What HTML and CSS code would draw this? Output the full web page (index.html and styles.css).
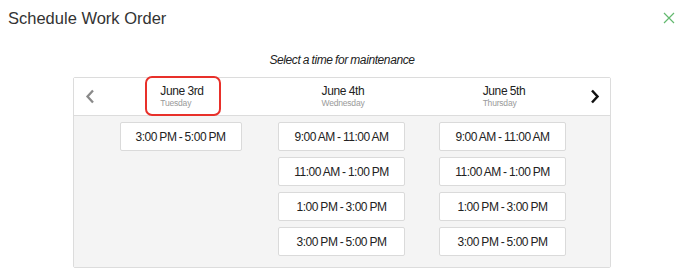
FILE: index.html
```html
<!DOCTYPE html>
<html lang="en">
<head>
    <meta charset="UTF-8">
    <title>Schedule Work Order</title>
    <link rel="stylesheet" href="styles.css">
</head>
<body>
    <div class="modal-header">
        <h1>Schedule Work Order</h1>
        <svg class="close" width="12" height="12" viewBox="0 0 12 12">
            <path d="M1 1 L11 11 M11 1 L1 11" stroke="#63b96f" stroke-width="1.2" fill="none"/>
        </svg>
    </div>

    <p class="prompt">Select a time for maintenance</p>

    <div class="scheduler">
        <div class="days">
            <div class="nav prev">
                <svg width="10" height="15" viewBox="0 0 10 15">
                    <path d="M8 1.5 L2.5 7.5 L8 13.5" stroke="#8a8a8a" stroke-width="2.3" fill="none"/>
                </svg>
            </div>
            <div class="day selected">
                <div class="day-label">
                    <div class="date">June 3rd</div>
                    <div class="weekday">Tuesday</div>
                </div>
                <div class="highlight"></div>
            </div>
            <div class="day">
                <div class="day-label">
                    <div class="date">June 4th</div>
                    <div class="weekday">Wednesday</div>
                </div>
            </div>
            <div class="day">
                <div class="day-label">
                    <div class="date">June 5th</div>
                    <div class="weekday">Thursday</div>
                </div>
            </div>
            <div class="nav next">
                <svg width="10" height="15" viewBox="0 0 10 15">
                    <path d="M2 1.5 L7.5 7.5 L2 13.5" stroke="#111" stroke-width="2.5" fill="none"/>
                </svg>
            </div>
        </div>

        <div class="slots">
            <div></div>
            <div class="slot-col">
                <div class="slot-list">
                    <button class="slot">3:00 PM - 5:00 PM</button>
                </div>
            </div>
            <div class="slot-col">
                <div class="slot-list">
                    <button class="slot">9:00 AM - 11:00 AM</button>
                    <button class="slot">11:00 AM - 1:00 PM</button>
                    <button class="slot">1:00 PM - 3:00 PM</button>
                    <button class="slot">3:00 PM - 5:00 PM</button>
                </div>
            </div>
            <div class="slot-col">
                <div class="slot-list">
                    <button class="slot">9:00 AM - 11:00 AM</button>
                    <button class="slot">11:00 AM - 1:00 PM</button>
                    <button class="slot">1:00 PM - 3:00 PM</button>
                    <button class="slot">3:00 PM - 5:00 PM</button>
                </div>
            </div>
            <div></div>
        </div>
    </div>
</body>
</html>
```

FILE: styles.css
```css
body {
    margin: 0;
    font-family: "Liberation Sans", Arial, sans-serif;
    color: #222;
    background: #fff;
}
.modal-header {
    display: flex;
    justify-content: space-between;
    align-items: center;
    padding: 7px 13px 0 8px;
    height: 22px;
}
h1 {
    margin: 0;
    font-size: 16.5px;
    font-weight: normal;
    color: #333;
}
.close {
    display: block;
}
.prompt {
    margin: 24px 0 0 73px;
    width: 538px;
    text-align: center;
    font-size: 12px;
    font-style: italic;
    letter-spacing: -0.4px;
    word-spacing: -0.5px;
    line-height: 14px;
    color: #222;
}
.scheduler {
    margin: 10px 0 0 73px;
    width: 536px;
    border: 1px solid #dcdcdc;
    border-radius: 2px;
}
.days,
.slots {
    display: grid;
    grid-template-columns: 26px repeat(3, 161px) 1fr;
}
.days {
    height: 37px;
    border-bottom: 1px solid #dcdcdc;
    background: #fff;
}
.nav {
    display: flex;
    align-items: center;
}
.nav.prev {
    padding-left: 11px;
}
.nav.next {
    padding-left: 7px;
}
.day {
    position: relative;
    display: flex;
    justify-content: center;
    align-items: center;
}
.day-label {
    text-align: left;
    padding-left: 3px;
}
.date {
    font-size: 12px;
    letter-spacing: -0.35px;
    word-spacing: -0.5px;
    line-height: 13px;
    color: #222;
}
.weekday {
    font-size: 8.5px;
    line-height: 10px;
    letter-spacing: -0.2px;
    color: #9a9a9a;
}
.highlight {
    position: absolute;
    top: -2px;
    left: 45px;
    width: 72px;
    height: 36px;
    border: 2px solid #e8302a;
    border-radius: 7px;
}
.slots {
    background: #f4f4f4;
    padding: 6px 0 11px;
}
.slot-col {
    display: flex;
    justify-content: center;
}
.slot-list {
    display: flex;
    flex-direction: column;
    gap: 6px;
}
.slot {
    height: 29px;
    padding: 0 15px;
    border: 1px solid #dadada;
    border-radius: 2px;
    background: #fff;
    font-family: inherit;
    font-size: 12px;
    letter-spacing: -0.45px;
    word-spacing: -0.6px;
    color: #222;
    cursor: pointer;
}
```
